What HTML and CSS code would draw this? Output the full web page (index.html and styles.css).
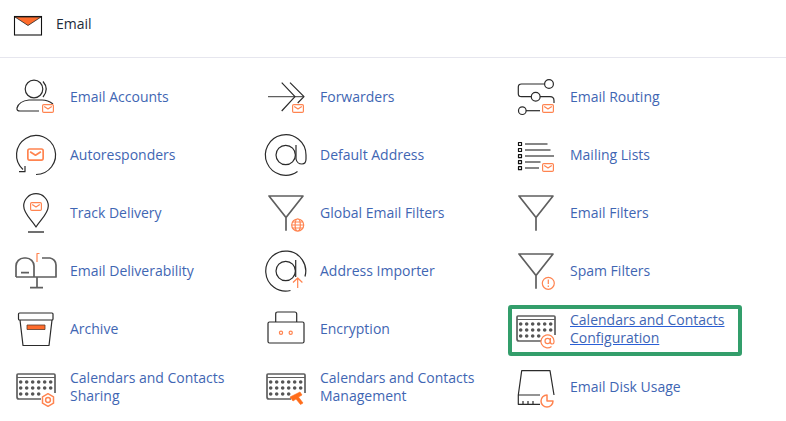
FILE: index.html
```html
<!DOCTYPE html>
<html lang="en">
<head>
  <meta charset="UTF-8">
  <meta name="viewport" content="width=device-width, initial-scale=1.0">
  <title>Email</title>
  <link rel="stylesheet" href="styles.css">
</head>
<body>
  <!-- shared icon parts -->
  <svg class="defs" width="0" height="0">
    <symbol id="mail" viewBox="0 0 12 9">
      <rect x="0.6" y="0.6" width="10.8" height="7.8" rx="1.2"/>
      <path d="M2.2 2.6 L6 5 L9.8 2.6"/>
    </symbol>
    <symbol id="calendar" viewBox="0 0 44 44">
      <path class="gray" d="M27 34 H5 Q3 34 3 32 V10 Q3 9 4 9 H40 Q41 9 41 10 V28"/>
      <path class="gray thin" d="M3 12.5 H41"/>
      <path class="dots" d="M6.7 17 H39 M6.7 23 H39 M6.7 29 H27"/>
    </symbol>
  </svg>

  <header class="section-head">
    <svg class="head-icon" width="30" height="22" viewBox="0 0 30 22">
      <rect x="1.5" y="1.5" width="27" height="18.5" fill="#fff" stroke="#111" stroke-width="1.1"/>
      <path d="M2 2 H28 L15 10.5 Z" fill="#ff6c2c" stroke="#222" stroke-width="0.8"/>
    </svg>
    <span>Email</span>
  </header>

  <div class="apps">
    <a class="app" href="#">
      <svg class="icon" viewBox="0 0 44 44">
        <circle cx="20" cy="14" r="8.8"/>
        <path d="M29 6.5 Q35.5 14 29 22"/>
        <path d="M25 36 H6 Q2.5 36 3 33 Q5 26 15 25 H28 Q34 25 39 29"/>
        <use class="accent" href="#mail" x="28" y="29" width="12" height="9"/>
      </svg>
      <span>Email Accounts</span>
    </a>
    <a class="app" href="#">
      <svg class="icon" viewBox="0 0 44 44">
        <path class="gray thin" d="M4 21.7 H39"/>
        <path d="M17.7 7.7 L31 21.7 L17.7 36 M26 7.7 L40 21.7 L33.7 28"/>
        <use class="accent" href="#mail" x="28" y="29" width="12" height="9"/>
      </svg>
      <span>Forwarders</span>
    </a>
    <a class="app" href="#">
      <svg class="icon" viewBox="0 0 44 44">
        <circle cx="35" cy="9" r="4.4"/>
        <path d="M30.6 9 H7.5 Q4.3 9 4.3 12 V18.7 Q4.3 21.7 7.5 21.7 H17"/>
        <circle cx="21.7" cy="21.7" r="4.4"/>
        <path d="M26 21.7 H36 Q40 21.7 40 25.7 V28"/>
        <circle cx="8.3" cy="35.7" r="3.8"/>
        <path d="M12 35.7 H26"/>
        <use class="accent" href="#mail" x="28" y="29" width="12" height="9"/>
      </svg>
      <span>Email Routing</span>
    </a>

    <a class="app" href="#">
      <svg class="icon" viewBox="0 0 44 44">
        <path d="M22 41.5 A19.5 19.5 0 1 0 9 36.5"/>
        <path d="M5 38.7 H11 V33"/>
        <use class="accent" href="#mail" x="13" y="15" width="17" height="13"/>
      </svg>
      <span>Autoresponders</span>
    </a>
    <a class="app" href="#">
      <svg class="icon" viewBox="0 0 44 44">
        <path d="M33.5 38.5 A20.3 20.3 0 1 1 42 22 V26 Q42 31 38 31 Q33 31 32 26 V12"/>
        <circle cx="21.7" cy="22" r="9.7"/>
      </svg>
      <span>Default Address</span>
    </a>
    <a class="app" href="#">
      <svg class="icon" viewBox="0 0 44 44">
        <path class="dark" d="M4.5 9.5 H7.5 V12.5 H4.5 Z M4.5 15.5 H7.5 V18.5 H4.5 Z M4.5 21.7 H7.5 V24.7 H4.5 Z M4.5 27.7 H7.5 V30.7 H4.5 Z M4.5 33.7 H7.5 V36.7 H4.5 Z"/>
        <path class="gray" d="M11 11 H33.5 M11 17 H36.5 M11 23 H40 M11 29 H26.5 M11 35 H25"/>
        <use class="accent" href="#mail" x="28" y="30" width="12" height="9"/>
      </svg>
      <span>Mailing Lists</span>
    </a>

    <a class="app" href="#">
      <svg class="icon" viewBox="0 0 44 44">
        <path d="M22 36 C18 29 9.7 23 9.7 15 A12.3 12.3 0 0 1 34.3 15 C34.3 23 26 29 22 36 Z"/>
        <path class="dark" d="M14 41 H30"/>
        <use class="accent" href="#mail" x="16" y="11" width="12" height="9"/>
      </svg>
      <span>Track Delivery</span>
    </a>
    <a class="app" href="#">
      <svg class="icon" viewBox="0 0 44 44">
        <path class="gray" d="M5 5 H39 L22 26.5 Z M22 26.5 V39.7"/>
        <g class="accent">
          <circle cx="33.7" cy="34" r="6"/>
          <ellipse cx="33.7" cy="34" rx="2.6" ry="6"/>
          <path d="M27.7 34 H39.7 M28.7 31 H38.7 M28.7 37 H38.7"/>
        </g>
      </svg>
      <span>Global Email Filters</span>
    </a>
    <a class="app" href="#">
      <svg class="icon" viewBox="0 0 44 44">
        <path class="gray" d="M5 5 H39 L22 26.5 Z M22 26.5 V39.7"/>
      </svg>
      <span>Email Filters</span>
    </a>

    <a class="app" href="#">
      <svg class="icon" viewBox="0 0 44 44">
        <path class="gray" d="M2 28 V17 A8 8 0 0 1 10 9 H12 A8 8 0 0 1 20 17 V28 M2 28 H42 V16 A7 7 0 0 0 36 9 H28"/>
        <path class="gray" d="M7 23.7 H15 M23 28 V38.7 M16 38.7 H29"/>
        <path class="accent" d="M23 13 V4.5 H25.5"/>
      </svg>
      <span>Email Deliverability</span>
    </a>
    <a class="app" href="#">
      <svg class="icon" viewBox="0 0 44 44">
        <path d="M26.5 41.5 A20 20 0 1 1 41 27.5"/>
        <circle cx="21.7" cy="22" r="9.7"/>
        <path d="M31.7 11 V28"/>
        <path class="accent" d="M33.7 39 V29 M29 33.5 L33.7 29 L38.4 33.5"/>
      </svg>
      <span>Address Importer</span>
    </a>
    <a class="app" href="#">
      <svg class="icon" viewBox="0 0 44 44">
        <path class="gray" d="M5 5 H39 L22 26.5 Z M22 26.5 V39.7"/>
        <g class="accent">
          <circle cx="34.3" cy="34.3" r="6"/>
          <path d="M34.3 30.5 V35 M34.3 36.6 V38"/>
        </g>
      </svg>
      <span>Spam Filters</span>
    </a>

    <a class="app" href="#">
      <svg class="icon" viewBox="0 0 44 44">
        <rect x="4.5" y="6" width="34.5" height="7" rx="1"/>
        <path d="M6 13 L9 38.5 H35 L38 13"/>
        <rect x="13" y="18" width="18" height="4.5" fill="#ff6c2c" stroke="#5a3a2a" stroke-width="0.8"/>
      </svg>
      <span>Archive</span>
    </a>
    <a class="app" href="#">
      <svg class="icon" viewBox="0 0 44 44">
        <rect x="4" y="15" width="36" height="21" rx="1.5"/>
        <path d="M11.7 15 V7 Q11.7 5 13.7 5 H30.7 Q32.7 5 32.7 7 V15"/>
        <circle class="accent" cx="17" cy="25.7" r="1.6"/>
        <circle class="accent" cx="26.7" cy="25.7" r="1.6"/>
      </svg>
      <span>Encryption</span>
    </a>
    <a class="app picked" href="#">
      <svg class="icon" viewBox="0 0 44 44">
        <use href="#calendar" width="44" height="44"/>
        <g class="accent">
          <path d="M37.5 39.5 A6.5 6.5 0 1 1 40 34 V35 Q40 37 38.3 37 Q36.4 37 36.4 35 V31"/>
          <circle cx="33.6" cy="34" r="2.6"/>
        </g>
      </svg>
      <span>Calendars and Contacts Configuration</span>
    </a>

    <a class="app" href="#">
      <svg class="icon" viewBox="0 0 44 44">
        <use href="#calendar" width="44" height="44"/>
        <g class="accent gear">
          <path d="M34 28.7 L39.5 31.8 V38.2 L34 41.3 L28.5 38.2 V31.8 Z"/>
          <circle cx="34" cy="35" r="2.4"/>
        </g>
      </svg>
      <span>Calendars and Contacts Sharing</span>
    </a>
    <a class="app" href="#">
      <svg class="icon" viewBox="0 0 44 44">
        <use href="#calendar" width="44" height="44"/>
        <path class="hammer" d="M26 32 L36 27 L38 30 L34.5 32 L39 38 L36.5 39.5 L32 34 L29 36 Z"/>
      </svg>
      <span>Calendars and Contacts Management</span>
    </a>
    <a class="app" href="#">
      <svg class="icon" viewBox="0 0 44 44">
        <path d="M4.3 30 L7.7 5.7 H36 L40 30"/>
        <path d="M4.3 30 V39.3 H26 M4.3 30 H26 M9 39 V36 M14 39 V36 M19 39 V36"/>
        <path class="accent pie" d="M33 36 V30 A6 6 0 1 0 39 36 Z"/>
      </svg>
      <span>Email Disk Usage</span>
    </a>
  </div>
</body>
</html>
```

FILE: styles.css
```css
body {
  margin: 0;
  background-color: #fff;
  font-family: "Open Sans", "Noto Sans", sans-serif;
  font-size: 14px;
  line-height: 18px;
  color: #1d2b3a;
}

.defs {
  display: block;
  height: 0;
}

.section-head {
  display: flex;
  align-items: center;
  height: 47px;
  padding-left: 13px;
  padding-bottom: 10px;
  border-bottom: 1px solid #e6e6ee;
}

.head-icon {
  margin-top: 4px;
  margin-right: 13px;
}

.apps {
  display: grid;
  grid-template-columns: repeat(3, 250px);
  grid-auto-rows: 58px;
  padding: 10px 0 0 14px;
}

.app {
  position: relative;
  display: flex;
  align-items: center;
  color: #3f66b3;
  text-decoration: none;
}

.app span {
  max-width: 170px;
}

.icon {
  flex: none;
  width: 44px;
  height: 44px;
  margin-right: 12px;
  overflow: visible;
  fill: none;
  stroke: #2b2b2b;
  stroke-width: 1.2;
  stroke-linejoin: round;
}

.gray {
  stroke: #5f5f5f;
  stroke-width: 1.7;
}

.thin {
  stroke-width: 1.2;
}

.dark {
  stroke: #111;
}

.dots {
  stroke: #555;
  stroke-width: 3.6;
  stroke-linecap: round;
  stroke-dasharray: 0 6;
}

.accent {
  stroke: #ff8450;
  stroke-width: 1.2;
  fill: #fff;
}

.gear,
.pie {
  stroke-width: 1.5;
}

.hammer {
  fill: #ff6c1a;
  stroke: #ff6c1a;
  stroke-width: 0.6;
}

.picked span {
  text-decoration: underline;
  text-decoration-color: #2a5fd8;
}

.picked::after {
  content: "";
  position: absolute;
  top: 5px;
  left: -6px;
  width: 226px;
  height: 43px;
  border: 4px solid #339e6b;
  border-radius: 3px;
}
```
